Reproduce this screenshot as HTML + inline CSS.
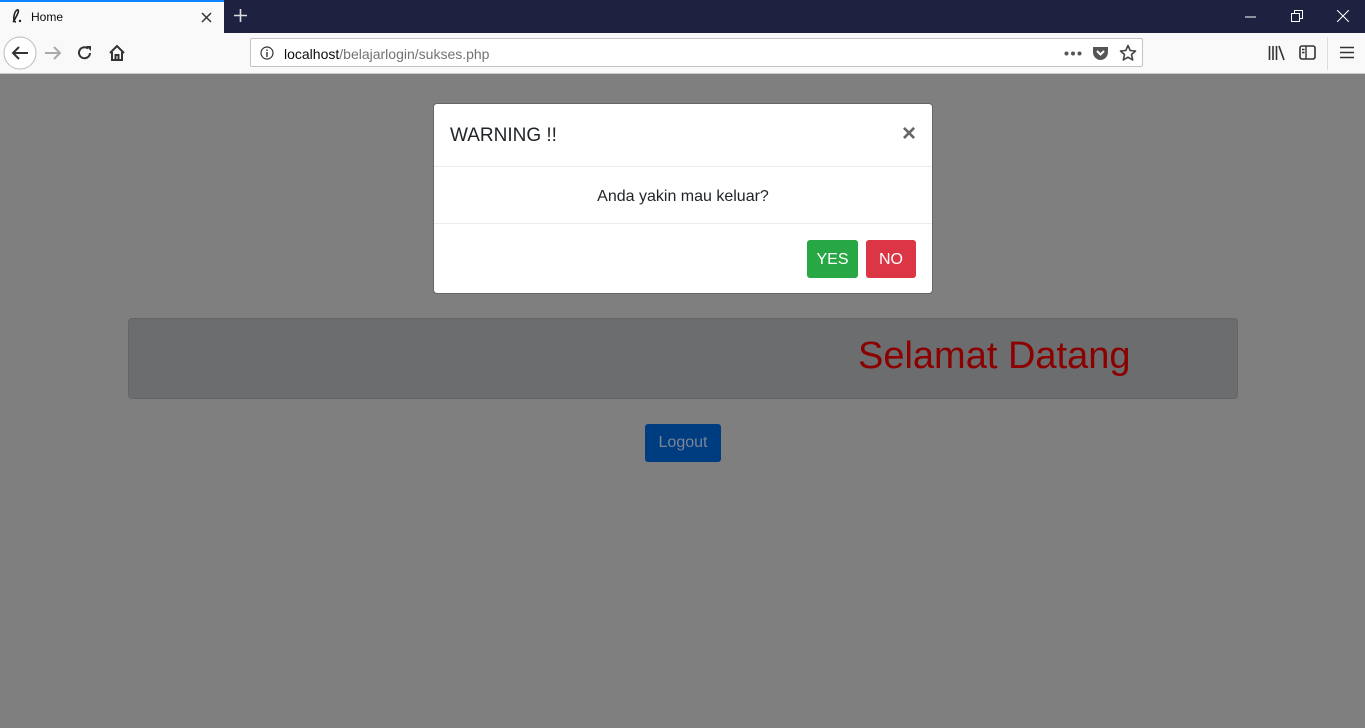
<!DOCTYPE html>
<html><head><meta charset="utf-8">
<style>
*{box-sizing:border-box;margin:0;padding:0}
body{width:1365px;height:728px;overflow:hidden;font-family:"Liberation Sans","DejaVu Sans",sans-serif;background:#7f7f7f;position:relative}
.tabs{position:absolute;left:0;top:0;width:1365px;height:33px;background:#1f2141}
.tab{position:absolute;left:0;top:0;width:224px;height:33px;background:#f9f9fa;border-top:2px solid #0a84ff}
.tab .t{position:absolute;left:31px;top:8px;font-size:12px;color:#0c0c0d}
.nav{position:absolute;left:0;top:33px;width:1365px;height:41px;background:#f9f9fa;border-bottom:1px solid #ccc}
.url{position:absolute;left:250px;top:5px;width:893px;height:29px;background:#fff;border:1px solid #c4c4c4;border-radius:2px}
.url .u{position:absolute;left:33px;top:7px;font-size:14px;color:#0c0c0d}
.url .u span{color:#737373}
.ic{position:absolute}
.jumbo{position:absolute;left:128px;top:318px;width:1110px;height:81px;background:#6c6d6f;border:1px solid #666;border-radius:4px}
.jumbo .h{position:absolute;left:729px;top:16px;font-size:38px;color:#8b0000;font-family:"Liberation Sans",sans-serif}
.logout{position:absolute;left:645px;top:424px;width:76px;height:38px;background:#003d80;border-radius:3px;color:#7a8596;font-size:16px;text-align:center;line-height:38px}
.modal{position:absolute;left:433px;top:103px;width:500px;height:191px;background:#fff;border:1px solid #666;border-radius:4px}
.mh{height:63px;border-bottom:1px solid #e9ecef;position:relative}
.mh .t{position:absolute;left:16px;top:21px;font-size:19px;color:#212529}
.mh .x{position:absolute;right:16px;top:16px;font-size:24px;color:#666;font-weight:bold}
.mb{height:57px;border-bottom:1px solid #e9ecef;text-align:center;font-size:16px;color:#212529;line-height:60px}
.btn{position:absolute;top:136px;height:38px;border-radius:3px;color:#fff;font-size:16px;text-align:center;line-height:40px}
</style></head><body>
<div class="tabs">
 <div class="tab">
  <svg class="ic" style="left:10px;top:6px" width="14" height="16" viewBox="0 0 14 16"><path d="M6 14 C2 14 4 4 7 2 C9 1 9 4 6 9 C5 11 4 13 3 14" fill="none" stroke="#222" stroke-width="1.6"/><circle cx="10" cy="13" r="1.2" fill="#222"/></svg>
  <div class="t">Home</div>
  <svg class="ic" style="left:201px;top:10px" width="11" height="11"><path d="M1 1L10 10M10 1L1 10" stroke="#333" stroke-width="1.5"/></svg>
 </div>
 <svg class="ic" style="left:233px;top:8px" width="15" height="15"><path d="M7.5 1V14M1 7.5H14" stroke="#ddd" stroke-width="1.6"/></svg>
 <svg class="ic" style="left:1245px;top:16px" width="11" height="2"><path d="M0 1H11" stroke="#fff"/></svg>
 <svg class="ic" style="left:1291px;top:10px" width="12" height="12"><path d="M0.5 3.5H8.5V11.5H0.5ZM3.5 3.5V0.5H11.5V8.5H8.5" fill="none" stroke="#fff"/></svg>
 <svg class="ic" style="left:1337px;top:10px" width="12" height="12"><path d="M0 0L12 12M12 0L0 12" stroke="#fff"/></svg>
</div>
<div class="nav">
 <svg class="ic" style="left:3px;top:3px" width="34" height="34"><circle cx="17" cy="17" r="16" fill="#fff" stroke="#bbb"/><path d="M25 17H10M16 11L10 17L16 23" fill="none" stroke="#333" stroke-width="2"/></svg>
 <svg class="ic" style="left:44px;top:12px" width="18" height="16"><path d="M1 8H16M10 2L16 8L10 14" fill="none" stroke="#aaa" stroke-width="2"/></svg>
 <svg class="ic" style="left:77px;top:12px" width="16" height="16"><path d="M13 8A5.5 5.5 0 1 1 11 3.5" fill="none" stroke="#333" stroke-width="2"/><path d="M9 1H14V6Z" fill="#333"/></svg>
 <svg class="ic" style="left:108px;top:11px" width="18" height="17"><path d="M2 9L9 2L16 9M4 8V16H14V8M7.5 16V11H10.5V16" fill="none" stroke="#333" stroke-width="2"/></svg>
 <div class="url">
  <svg class="ic" style="left:9px;top:7px" width="14" height="14"><circle cx="7" cy="7" r="6" fill="none" stroke="#333" stroke-width="1.2"/><path d="M7 6V11M7 3.5V5" stroke="#333" stroke-width="1.4"/></svg>
  <div class="u">localhost<span>/belajarlogin/sukses.php</span></div>
  <svg class="ic" style="left:813px;top:12px" width="18" height="5"><circle cx="2.5" cy="2.5" r="2" fill="#555"/><circle cx="9" cy="2.5" r="2" fill="#555"/><circle cx="15.5" cy="2.5" r="2" fill="#555"/></svg>
  <svg class="ic" style="left:841px;top:6px" width="17" height="16"><path d="M1 2H16V7C16 12 12 15 8.5 15C5 15 1 12 1 7Z" fill="#555"/><path d="M5 6L8.5 9.5L12 6" fill="none" stroke="#fff" stroke-width="2"/></svg>
  <svg class="ic" style="left:868px;top:5px" width="18" height="18"><path d="M9 1.5L11.2 6.5L16.5 7L12.5 10.5L13.7 16L9 13.2L4.3 16L5.5 10.5L1.5 7L6.8 6.5Z" fill="none" stroke="#444" stroke-width="1.6" stroke-linejoin="round"/></svg>
 </div>
 <svg class="ic" style="left:1268px;top:12px" width="18" height="16"><path d="M1.5 1V15M5 1V15M8.5 1V15M11 1L16 15" stroke="#333" stroke-width="1.6"/></svg>
 <svg class="ic" style="left:1299px;top:12px" width="17" height="15"><rect x="1" y="1" width="15" height="13" rx="2" fill="none" stroke="#333" stroke-width="1.6"/><path d="M7 1V14M3 4.5H5.5M3 7.5H5.5" stroke="#333" stroke-width="1.4"/></svg>
 <div style="position:absolute;left:1327px;top:4px;width:1px;height:33px;background:#ddd"></div>
 <svg class="ic" style="left:1340px;top:13px" width="14" height="13"><path d="M0 1.5H14M0 6.5H14M0 11.5H14" stroke="#333" stroke-width="1.6"/></svg>
</div>
<div class="jumbo"><div class="h">Selamat Datang</div></div>
<div class="logout">Logout</div>
<div class="modal">
 <div class="mh"><div class="t">WARNING !!</div><div class="x">×</div></div>
 <div class="mb">Anda yakin mau keluar?</div>
 <div class="btn" style="left:373px;width:51px;background:#28a745">YES</div>
 <div class="btn" style="left:432px;width:50px;background:#dc3545">NO</div>
</div>
</body></html>
